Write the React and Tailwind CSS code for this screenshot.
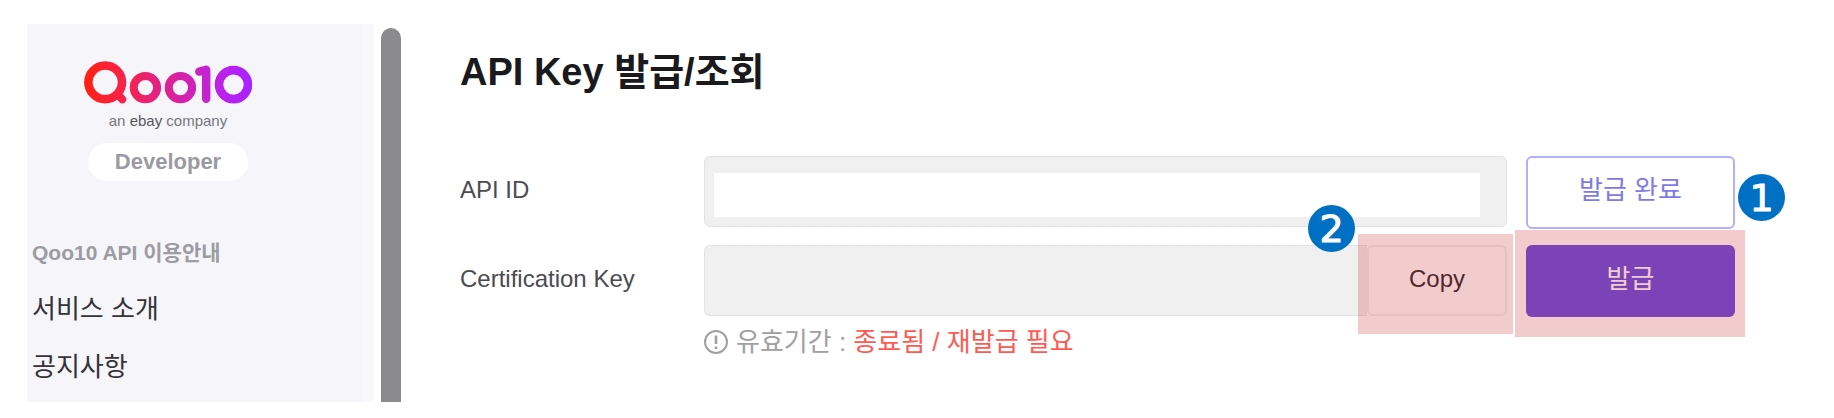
const NAV_ITEMS = [
  { label: "서비스 소개", href: "#about" },
  { label: "공지사항", href: "#notice" },
];

function Logo() {
  return (
    <svg width="168" height="44" viewBox="0 0 168 44" fill="none" role="img" aria-label="Qoo10">
      <defs>
        <linearGradient id="logo" gradientUnits="userSpaceOnUse" x1="0" y1="0" x2="168" y2="0">
          <stop offset="0" stopColor="#ff2010" />
          <stop offset="0.2" stopColor="#fb2240" />
          <stop offset="0.55" stopColor="#d822a0" />
          <stop offset="0.85" stopColor="#b822f0" />
          <stop offset="1" stopColor="#a822ff" />
        </linearGradient>
      </defs>
      <g stroke="url(#logo)" strokeLinecap="round" strokeLinejoin="round">
        <circle cx="21.2" cy="21.3" r="16.8" strokeWidth="8.6" />
        <path d="M33 33L38.3 38.3" strokeWidth="8" />
        <circle cx="61.4" cy="26.6" r="11.7" strokeWidth="8" />
        <circle cx="96.4" cy="26.6" r="11.7" strokeWidth="8" />
        <path d="M115.3 10.6L122.2 8.8L122.2 37.8" strokeWidth="8.4" />
        <circle cx="149.5" cy="23.6" r="14.5" strokeWidth="8.6" />
      </g>
    </svg>
  );
}

function StepBadge({ children, className }) {
  return (
    <span
      className={`absolute z-20 flex h-[47px] w-[47px] items-center justify-center rounded-full bg-[#0070c4] font-['DejaVu_Sans'] text-[38px] leading-none text-white [-webkit-text-stroke:1px_white] ${className}`}
    >
      {children}
    </span>
  );
}

function Sidebar() {
  return (
    <aside className="flex shrink-0">
      <div className="w-[347px] border-r-[12px] border-[#f9f9fc] bg-[#f5f5fa]">
        <div className="flex w-[282px] flex-col items-center pt-[37px]">
          <Logo />
          <p className="mt-1.5 text-[15px] leading-5 text-[#77777c]">
            an <span className="text-[#55555a]">ebay</span> company
          </p>
          <span className="mt-3 flex h-[38px] w-40 items-center justify-center rounded-full bg-white pb-0.5 text-[22px] font-bold text-[#9a9aa2]">
            Developer
          </span>
        </div>
        <nav className="mt-14 pl-[5px]">
          <h2 className="text-[21px] leading-8 font-bold text-[#9c9ca2]">Qoo10 API 이용안내</h2>
          <ul>
            {NAV_ITEMS.map((item) => (
              <li key={item.href} className="mt-[22px]">
                <a href={item.href} className="block text-[26px] leading-9 text-[#333338]">
                  {item.label}
                </a>
              </li>
            ))}
          </ul>
        </nav>
      </div>
      <div className="mt-1 ml-[7px] w-5 rounded-t-full bg-[#8b8b8d]" />
    </aside>
  );
}

export default function App() {
  return (
    <div className="flex min-h-screen bg-white pt-6 pb-4 pl-[27px] font-['Liberation_Sans','Noto_Sans_CJK_KR',sans-serif]">
      <Sidebar />

      <main className="min-w-0 flex-1 pt-5 pr-[99px] pl-[59px]">
        <h1 className="text-[38px] leading-14 font-bold text-[#1a1a1c]">API Key 발급/조회</h1>

        <form
          onSubmit={(e) => e.preventDefault()}
          className="mt-14 grid grid-cols-[244px_1fr_209px] items-start gap-y-4 text-2xl"
        >
          <label htmlFor="api-id" className="leading-[68px] text-[#4b4b52]">API ID</label>
          <div className="mr-[19px] h-[71px] rounded-md border border-[#e3e3e5] bg-[#f0f0f1] pt-4 pr-[26px] pl-[9px]">
            <input id="api-id" readOnly className="block h-11 w-full bg-white px-3 text-[#4b4b52] outline-none" />
          </div>
          <div className="relative">
            <button
              type="button"
              className="h-[73px] w-full rounded-md border-2 border-[#b3b0f6] bg-white pb-1 text-[26px] text-[#7f7be6]"
            >
              발급 완료
            </button>
            <StepBadge className="top-[18px] -right-[50px]">1</StepBadge>
          </div>

          <label htmlFor="cert-key" className="leading-[68px] text-[#4b4b52]">Certification Key</label>
          <div className="mr-[19px]">
            <div className="flex h-[71px]">
              <input
                id="cert-key"
                readOnly
                className="min-w-0 flex-1 rounded-l-md border border-r-0 border-[#e3e3e5] bg-[#f0f0f1] px-3 text-[#4b4b52] outline-none"
              />
              <div className="relative">
                <button
                  type="button"
                  className="h-full w-[140px] rounded-md border-2 border-[#efeff1] bg-white pb-1 text-[#333338]"
                >
                  Copy
                </button>
                <span className="pointer-events-none absolute -top-[11px] -right-1.5 -bottom-[18px] -left-[9px] z-10 bg-[#c00000]/20" />
                <StepBadge className="-top-10 -left-[59px]">2</StepBadge>
              </div>
            </div>
            <p className="mt-1.5 flex items-center gap-2 text-[26px] leading-10 text-[#a0a0a4]">
              <svg width="24" height="24" viewBox="0 0 24 24" fill="none" stroke="currentColor" strokeWidth="2" aria-hidden="true">
                <circle cx="12" cy="12" r="11" />
                <path d="M12 5.5v8.5M12 16.5v2.5" strokeWidth="2.6" />
              </svg>
              <span>
                유효기간 : <span className="text-[#ff5a52]">종료됨 / 재발급 필요</span>
              </span>
            </p>
          </div>
          <div className="relative">
            <button type="submit" className="h-[72px] w-full rounded-md bg-[#6b54e6] pb-1 text-[26px] text-white">
              발급
            </button>
            <span className="pointer-events-none absolute -top-[15px] -right-[10px] -bottom-5 -left-[11px] z-10 bg-[#c00000]/20" />
          </div>
        </form>
      </main>
    </div>
  );
}
